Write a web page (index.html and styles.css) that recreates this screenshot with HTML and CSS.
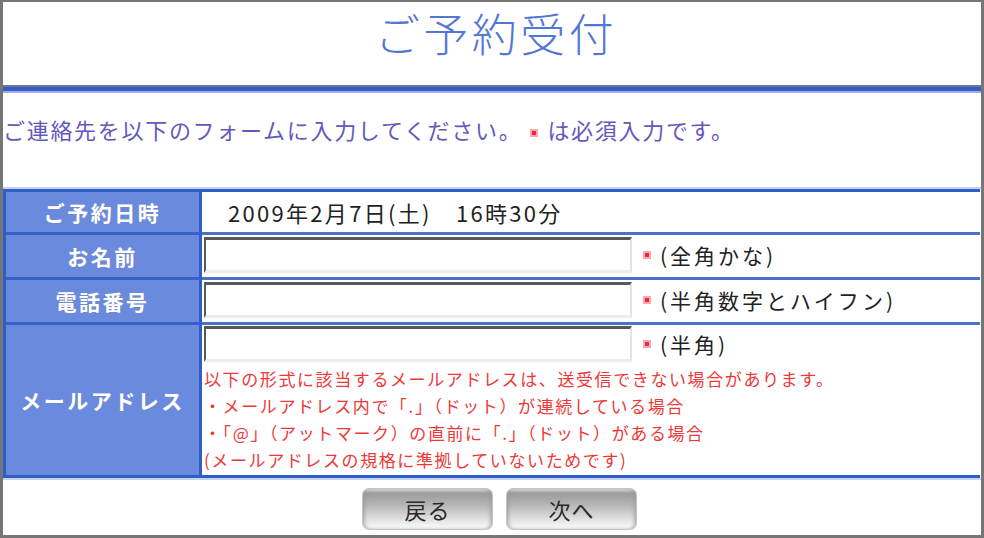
FILE: index.html
```html
<!DOCTYPE html>
<html lang="ja">
<head>
<meta charset="utf-8">
<title>ご予約受付</title>
<link rel="stylesheet" href="styles.css">
</head>
<body>
<div class="frame">
  <h1 class="title">ご予約受付</h1>
  <div class="rule"></div>
  <p class="intro">ご連絡先を以下のフォームに入力してください。<span class="req"></span>は必須入力です。</p>
  <div class="table-wrap">
    <table class="form">
      <tr class="row-date">
        <th>ご予約日時</th>
        <td class="date">2009年2月7日(土)　16時30分</td>
      </tr>
      <tr>
        <th>お名前</th>
        <td><div class="field"><input type="text" class="box"><span class="req"></span><span class="hint">(全角かな)</span></div></td>
      </tr>
      <tr>
        <th>電話番号</th>
        <td><div class="field"><input type="text" class="box"><span class="req"></span><span class="hint">(半角数字とハイフン)</span></div></td>
      </tr>
      <tr class="row-mail">
        <th>メールアドレス</th>
        <td>
          <div class="field"><input type="text" class="box"><span class="req"></span><span class="hint">(半角)</span></div>
          <div class="notes">
            <div>以下の形式に該当するメールアドレスは、送受信できない場合があります。</div>
            <div>・メールアドレス内で「.」（ドット）が連続している場合</div>
            <div>・「@」（アットマーク）の直前に「.」（ドット）がある場合</div>
            <div>(メールアドレスの規格に準拠していないためです)</div>
          </div>
        </td>
      </tr>
    </table>
  </div>
  <div class="buttons">
    <button type="button" class="btn">戻る</button>
    <button type="button" class="btn">次へ</button>
  </div>
</div>
</body>
</html>
```
FILE: styles.css
```css
html, body {
  margin: 0;
  padding: 0;
  background: #ffffff;
}
body {
  font-family: "Noto Sans CJK JP", "Noto Sans", sans-serif;
  color: #222222;
}
.frame {
  width: 984px;
  height: 538px;
  box-sizing: border-box;
  border-top: 2px solid #767676;
  border-left: 3px solid #767676;
  border-right: 3px solid #767676;
  border-bottom: 3px solid #767676;
  overflow: hidden;
}
.title {
  margin: 0;
  height: 83px;
  line-height: 62px;
  text-align: center;
  font-size: 45px;
  font-weight: 300;
  letter-spacing: 3.5px;
  padding-left: 8px;
  box-sizing: border-box;
  color: #5375d6;
}
.rule {
  height: 4px;
  border-top: 2px solid #68789c;
  border-bottom: 2px solid #9cb0e4;
  background: #3a5cc2;
}
.intro {
  margin: 0;
  padding: 23px 0 45px 0;
  line-height: 26px;
  font-size: 22px;
  letter-spacing: 1.7px;
  color: #6458bc;
  white-space: nowrap;
}
.intro .req {
  margin: 0 9px 0 8px;
}
.req {
  display: inline-block;
  width: 4px;
  height: 4px;
  background: #e8283c;
  border: 2px solid #ffa8b0;
  vertical-align: middle;
}
.table-wrap {
  border-top: 2px solid #c4d2f2;
  border-bottom: 2px solid #c4d2f2;
}
.form {
  width: 977px;
  table-layout: fixed;
  border-collapse: separate;
  border-spacing: 0;
  border-top: 3px solid #2f5ec6;
  border-left: 3px solid #2f5ec6;
  border-bottom: 3px solid #2f5ec6;
}
.form th {
  width: 193px;
  padding: 0;
  background: #6a8ade;
  color: #ffffff;
  font-size: 21px;
  font-weight: bold;
  letter-spacing: 2.5px;
  text-align: center;
  border-right: 3px solid #2f5ec6;
  border-bottom: 3px solid #3462c8;
  text-shadow: 0 0 1px #8090b0;
}
.form td {
  padding: 2px 0 4px 2px;
  border-bottom: 3px solid #4a72cc;
  vertical-align: top;
}
.form tr:last-child th,
.form tr:last-child td {
  border-bottom: none;
}
.form .row-date td {
  height: 40px;
  padding: 0 0 0 26px;
  vertical-align: middle;
  font-size: 22px;
  letter-spacing: 2.3px;
  color: #222222;
}
.form .row-mail td {
  padding: 1px 0 2px 2px;
}
.field {
  display: flex;
  align-items: center;
  height: 36px;
}
.box {
  box-sizing: border-box;
  width: 428px;
  height: 36px;
  margin: 0;
  padding: 0;
  background: #ffffff;
  border-top: 3px solid #585858;
  border-left: 2px solid #585858;
  border-right: 2px solid #e4e4e4;
  border-bottom: 3px solid #ececec;
  outline: none;
}
.field .req {
  margin: 0 9px 0 11px;
}
.hint {
  font-size: 21px;
  letter-spacing: 3px;
  color: #222222;
  white-space: nowrap;
}
.notes {
  margin-top: 3px;
  font-size: 17px;
  line-height: 27px;
  letter-spacing: 1.6px;
  color: #ee3838;
  white-space: nowrap;
}
.buttons {
  display: flex;
  justify-content: center;
  gap: 13px;
  margin-top: 8px;
  padding-left: 15px;
}
.btn {
  width: 131px;
  height: 42px;
  margin: 0;
  padding: 0;
  border: 1px solid #c4c4c4;
  border-radius: 7px;
  background: linear-gradient(to bottom, #e4e4e4 0%, #9c9c9c 10%, #b0b0b0 35%, #d4d4d4 65%, #f2f2f2 90%, #fafafa 100%);
  box-shadow: inset 3px 0 4px -2px #999999, inset -3px 0 4px -2px #999999;
  font-family: "Noto Sans CJK JP", "Noto Sans", sans-serif;
  font-size: 22px;
  letter-spacing: 1px;
  color: #2a2a2a;
}
```
